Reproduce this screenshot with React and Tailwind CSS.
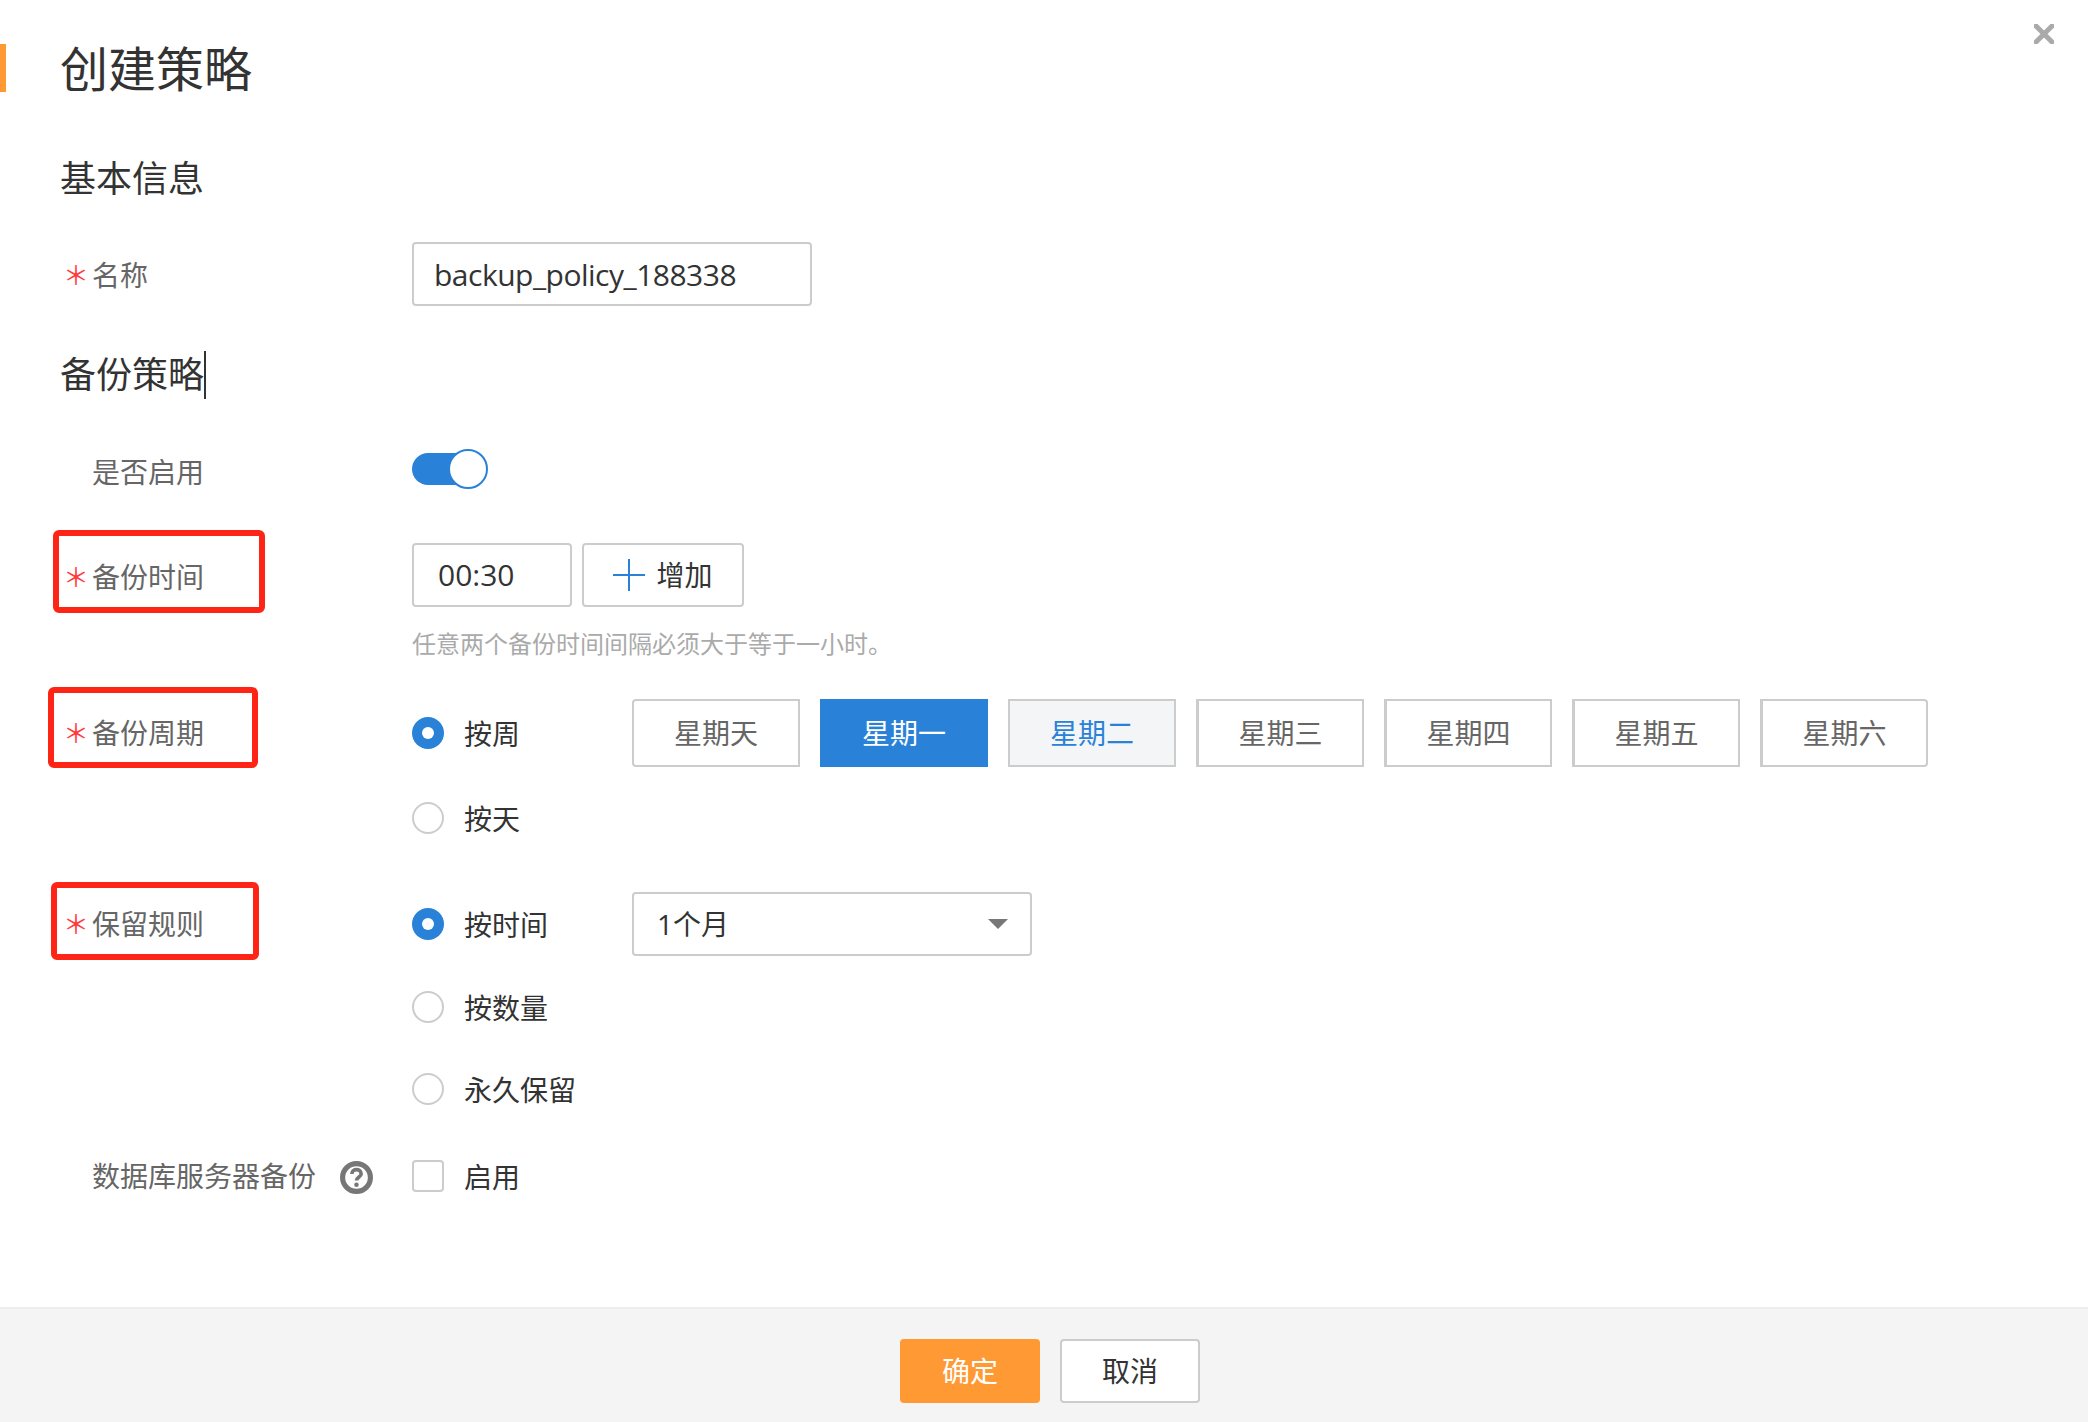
import React from 'react';

const days = ['星期天', '星期一', '星期二', '星期三', '星期四', '星期五', '星期六'];

function dayClass(i) {
	if (i === 1) return 'h-[68px] w-[168px] bg-[#2a82d8] text-[28px] leading-none text-white';
	if (i === 2) return 'h-[68px] w-[168px] border-2 border-[#ccc] bg-[#f4f5f7] text-[28px] leading-none text-[#2a82d8]';
	if (i === 0) return 'h-[68px] w-[168px] rounded-l-[4px] border-2 border-[#ccc] bg-white text-[28px] leading-none text-[#666]';
	if (i === 6) return 'h-[68px] w-[168px] rounded-r-[4px] border-2 border-l-[3px] border-[#ccc] bg-white text-[28px] leading-none text-[#666]';
	return 'h-[68px] w-[168px] border-2 border-l-[3px] border-[#ccc] bg-white text-[28px] leading-none text-[#666]';
}

function Label({ required, children }) {
	return (
		<div className="flex items-center pl-[92px] text-[28px] leading-none text-[#666]">
			{required && <span className="ml-[-29px] w-[29px] text-[26px] font-normal text-[#ff3b3b]">＊</span>}
			<span>{children}</span>
		</div>
	);
}

function Radio({ checked, children, className = '' }) {
	return (
		<div className={`flex items-center text-[28px] leading-none text-[#333] ${className}`}>
			{checked ? (
				<span className="flex h-8 w-8 items-center justify-center rounded-full bg-[#2a82d8]">
					<span className="h-3 w-3 rounded-full bg-white"></span>
				</span>
			) : (
				<span className="h-8 w-8 rounded-full border-2 border-[#ccc] bg-white"></span>
			)}
			<span className="ml-5 pt-[2px]">{children}</span>
		</div>
	);
}

function Mark({ className }) {
	return <div className={`absolute rounded-[6px] border-[6px] border-[#ff2516] ${className}`}></div>;
}

function App() {
	return (
		<div className="relative flex h-[1422px] w-[2088px] flex-col overflow-hidden bg-white font-['Open_Sans','Noto_Sans_CJK_SC',sans-serif] text-[#333]">
			<button className="absolute right-[34px] top-[24px]">
				<svg width="20" height="20" viewBox="0 0 20 20" className="block">
					<path d="M2 2 L18 18 M18 2 L2 18" stroke="#aaa" strokeWidth="5" strokeLinecap="round" />
				</svg>
			</button>

			<div className="flex-1">
				<div className="flex h-[136px] items-center">
					<div className="h-12 w-[6px] bg-[#ff9933]"></div>
					<h1 className="ml-[54px] pt-[2px] text-[48px] font-normal leading-none">创建策略</h1>
				</div>

				<h2 className="flex h-[84px] items-center pl-[60px] pt-[2px] text-[36px] leading-none">基本信息</h2>

				<div className="mt-[22px] flex items-center">
					<div className="w-[412px] pt-[2px]"><Label required>名称</Label></div>
					<div className="flex h-16 w-[400px] items-center rounded border-2 border-[#ccc] pl-5 pt-[2px] text-[30px] leading-none tracking-[-0.5px]">backup_policy_188338</div>
				</div>

				<h2 className="mt-[21px] flex h-24 items-center pl-[60px] text-[36px] leading-none">
					备份策略<span className="h-12 w-[2px] bg-[#333]"></span>
				</h2>

				<div className="mt-[26px] flex items-center">
					<div className="w-[412px] pt-[6px]"><Label>是否启用</Label></div>
					<div className="relative flex h-10 w-[76px] items-center">
						<div className="h-8 w-[50px] rounded-l-full bg-[#2a82d8]"></div>
						<div className="absolute right-0 top-0 h-10 w-10 rounded-full border-2 border-[#2a82d8] bg-white"></div>
					</div>
				</div>

				<div className="mt-[54px] flex">
					<div className="relative flex h-16 w-[412px] items-center pt-[4px]">
						<Label required>备份时间</Label>
						<Mark className="left-[53px] top-[-13px] h-[83px] w-[212px]" />
					</div>
					<div>
						<div className="flex gap-[10px]">
							<div className="flex h-16 w-40 items-center rounded border-2 border-[#ccc] pl-6 text-[30px] leading-none">00:30</div>
							<button className="flex h-16 w-[162px] items-center justify-center gap-[11px] rounded border-2 border-[#ccc] text-[28px] leading-none">
								<svg width="32" height="32" viewBox="0 0 32 32">
									<path d="M16 0 V32 M0 16 H32" stroke="#2a82d8" strokeWidth="2" />
								</svg>
								增加
							</button>
						</div>
						<p className="mt-[21px] text-[24px] leading-8 text-[#aaa]">任意两个备份时间间隔必须大于等于一小时。</p>
					</div>
				</div>

				<div className="mt-[39px] flex">
					<div className="relative flex h-[68px] w-[412px] items-center">
						<Label required>备份周期</Label>
						<Mark className="left-[48px] top-[-12px] h-[81px] w-[210px]" />
					</div>
					<div>
						<div className="flex items-center">
							<Radio checked className="w-[220px]">按周</Radio>
							<div className="flex gap-5">
								{days.map((d, i) => (
									<button key={d} className={dayClass(i)}>{d}</button>
								))}
							</div>
						</div>
						<Radio className="mt-[35px]">按天</Radio>
					</div>
				</div>

				<div className="mt-[58px] flex">
					<div className="relative flex h-16 w-[412px] items-center">
						<Label required>保留规则</Label>
						<Mark className="left-[51px] top-[-10px] h-[78px] w-[208px]" />
					</div>
					<div>
						<div className="flex items-center">
							<Radio checked className="w-[220px]">按时间</Radio>
							<div className="flex h-16 w-[400px] items-center justify-between rounded border-2 border-[#ccc] pl-[23px] pr-[22px] text-[28px] leading-none">
								1个月
								<svg width="20" height="10" viewBox="0 0 20 10">
									<path d="M0 0 H20 L10 10 Z" fill="#777" />
								</svg>
							</div>
						</div>
						<Radio className="mt-[35px]">按数量</Radio>
						<Radio className="mt-[50px]">永久保留</Radio>
					</div>
				</div>

				<div className="mt-[53px] flex items-center">
					<div className="flex w-[412px] items-center">
						<Label>数据库服务器备份</Label>
						<svg width="33" height="33" viewBox="0 0 32 32" className="ml-6 mt-[3px]">
							<circle cx="16" cy="16" r="13.5" fill="none" stroke="#777" strokeWidth="5" />
							<path d="M11.5 12.5 C11.5 7 20.5 7 20.5 12.5 C20.5 15.5 16 15.5 16 19" fill="none" stroke="#777" strokeWidth="3.5" />
							<circle cx="16" cy="23" r="2.2" fill="#777" />
						</svg>
					</div>
					<div className="flex items-center text-[28px] leading-none">
						<span className="h-8 w-8 rounded border-2 border-[#ccc] bg-white"></span>
						<span className="ml-5 pt-[2px]">启用</span>
					</div>
				</div>
			</div>

			<div className="flex h-[115px] justify-center gap-5 border-t-2 border-[#eee] bg-[#f4f4f4] pl-3 pt-[30px]">
				<button className="h-16 w-[140px] rounded bg-[#ff9933] text-[28px] leading-none text-white">确定</button>
				<button className="h-16 w-[140px] rounded border-2 border-[#ccc] bg-white text-[28px] leading-none text-[#333]">取消</button>
			</div>
		</div>
	);
}

export default App;
